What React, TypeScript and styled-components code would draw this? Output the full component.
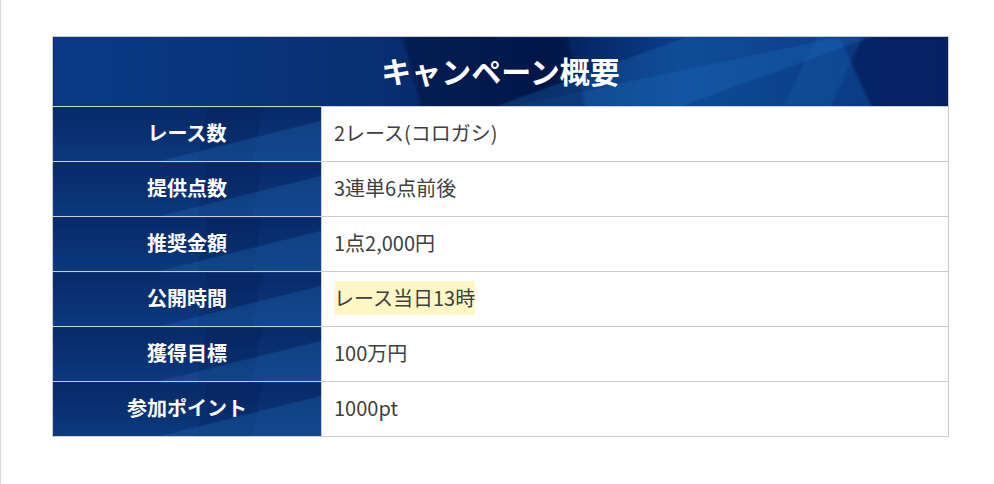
import React from "react";
import styled, { createGlobalStyle } from "styled-components";

const GlobalStyle = createGlobalStyle`
  html, body { margin: 0; padding: 0; background: #fff; }
  body {
    font-family: "Noto Sans CJK JP", "Noto Sans", sans-serif;
    color: #333;
    border-left: 1px solid #d9d9d9;
    min-height: 484px;
    box-sizing: border-box;
  }
`;

const Page = styled.div`
  padding: 36px 45px 0 51px;
`;

const Table = styled.table`
  width: 897px;
  border-collapse: collapse;
  border: 1px solid #cccccc;
  table-layout: fixed;
`;

const LabelCol = styled.col`
  width: 269px;
`;

const facetBg = `
  linear-gradient(166deg, rgba(0,0,0,0) 66%, rgba(30,100,175,0.35) 66.5%),
  linear-gradient(100deg, rgba(0,0,0,0) 55%, rgba(0,20,70,0.18) 55.5%, rgba(0,20,70,0.18) 75%, rgba(0,0,0,0) 75.5%),
  linear-gradient(180deg, #082a68 0%, #0a3274 60%, #0b3a80 100%)
`;

const HeaderCell = styled.th`
  height: 66px;
  padding: 0 0 3px;
  text-align: center;
  color: #fff;
  font-size: 30px;
  font-weight: 700;
  border-bottom: 1px solid #cccccc;
  background:
    linear-gradient(160deg, rgba(0,0,0,0) 58%, rgba(30,110,190,0.3) 58.5%, rgba(30,110,190,0.3) 75%, rgba(0,0,0,0) 75.5%),
    linear-gradient(115deg, rgba(0,0,0,0) 82%, rgba(20,90,170,0.35) 82.5%, rgba(20,90,170,0.35) 87%, rgba(0,0,0,0) 87.5%),
    linear-gradient(65deg, rgba(0,0,0,0) 88%, rgba(2,20,80,0.6) 88.5%),
    linear-gradient(75deg, rgba(0,0,0,0) 40%, rgba(0,12,50,0.45) 40.5%, rgba(0,12,50,0.45) 58%, rgba(0,0,0,0) 58.5%),
    linear-gradient(168deg, rgba(0,0,0,0) 64%, rgba(25,105,185,0.3) 64.5%),
    linear-gradient(90deg, #0a3a86 0%, #073073 35%, #041f5a 55%, #093e88 70%, #062e76 85%, #021e66 100%);
`;

const Row = styled.tr`
  border-top: 1px solid #cccccc;
`;

const Label = styled.th`
  height: 51px;
  padding: 0 0 3px;
  text-align: center;
  color: #fff;
  font-size: 20px;
  font-weight: 700;
  border-right: 1px solid #cccccc;
  border-top: 1px solid #cccccc;
  background: ${facetBg};
`;

const Value = styled.td`
  height: 51px;
  padding: 0 12px 3px;
  text-align: left;
  font-size: 20px;
  font-weight: 400;
  color: #404040;
  border-top: 1px solid #cccccc;
  background: #fff;
`;

const Marker = styled.span`
  background: #fff8c6;
  padding: 2px 0 3px;
`;

const rows: { label: string; value: React.ReactNode }[] = [
  { label: "レース数", value: "2レース(コロガシ)" },
  { label: "提供点数", value: "3連単6点前後" },
  { label: "推奨金額", value: "1点2,000円" },
  { label: "公開時間", value: <Marker>レース当日13時</Marker> },
  { label: "獲得目標", value: "100万円" },
  { label: "参加ポイント", value: "1000pt" },
];

export default function App() {
  return (
    <>
      <GlobalStyle />
      <Page>
        <Table>
          <colgroup>
            <LabelCol />
            <col />
          </colgroup>
          <thead>
            <tr>
              <HeaderCell colSpan={2}>キャンペーン概要</HeaderCell>
            </tr>
          </thead>
          <tbody>
            {rows.map((r) => (
              <Row key={r.label}>
                <Label>{r.label}</Label>
                <Value>{r.value}</Value>
              </Row>
            ))}
          </tbody>
        </Table>
      </Page>
    </>
  );
}
